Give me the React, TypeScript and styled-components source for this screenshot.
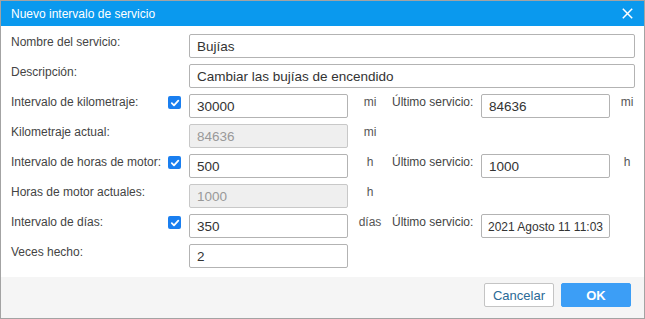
import styled, { createGlobalStyle } from 'styled-components';

const GlobalStyle = createGlobalStyle`
  html, body {
    margin: 0;
    padding: 0;
    background: #ffffff;
  }
  body {
    font-family: 'Liberation Sans', Arial, sans-serif;
  }
`;

type RowData = {
  label: string;
  checked?: boolean;
  value: string;
  disabled?: boolean;
  full?: boolean;
  unit?: string;
  last?: string;
  lastUnit?: string;
};

const rows: RowData[] = [
  { label: 'Nombre del servicio:', value: 'Bujías', full: true },
  { label: 'Descripción:', value: 'Cambiar las bujías de encendido', full: true },
  { label: 'Intervalo de kilometraje:', checked: true, value: '30000', unit: 'mi', last: '84636', lastUnit: 'mi' },
  { label: 'Kilometraje actual:', value: '84636', disabled: true, unit: 'mi' },
  { label: 'Intervalo de horas de motor:', checked: true, value: '500', unit: 'h', last: '1000', lastUnit: 'h' },
  { label: 'Horas de motor actuales:', value: '1000', disabled: true, unit: 'h' },
  { label: 'Intervalo de días:', checked: true, value: '350', unit: 'días', last: '2021 Agosto 11 11:03' },
  { label: 'Veces hecho:', value: '2' },
];

const Dialog = styled.div`
  box-sizing: border-box;
  width: 645px;
  height: 319px;
  border: 1px solid #a3a3a3;
  display: flex;
  flex-direction: column;
  background: #fff;
`;

const Header = styled.div`
  height: 25px;
  background: #0a99ee;
  color: #fff;
  display: flex;
  align-items: center;
  justify-content: space-between;
  padding: 0 11px 0 10px;
  font-size: 12px;
`;

const Close = styled.button`
  border: 0;
  background: none;
  padding: 0;
  width: 11px;
  height: 11px;
  display: flex;
  cursor: pointer;
`;

const Body = styled.div`
  flex: 1;
  display: flex;
  flex-direction: column;
  gap: 6px;
  padding: 8px 0 0 10px;
`;

const Row = styled.div`
  display: flex;
  align-items: flex-start;
  height: 24px;
`;

const Label = styled.div<{ $w: number }>`
  flex: 0 0 ${(p) => p.$w}px;
  min-width: 0;
  font-size: 12px;
  line-height: 14px;
  margin-top: 1px;
  color: #444;
  white-space: nowrap;
`;

const CheckCell = styled.div`
  flex: 0 0 21px;
  height: 24px;
  padding-top: 2px;
  box-sizing: border-box;
`;

const Check = styled.span`
  display: flex;
  align-items: center;
  justify-content: center;
  width: 13px;
  height: 13px;
  border-radius: 2px;
  background: #1a7ff0;
`;

const Field = styled.input<{ $w: number; $small?: boolean }>`
  box-sizing: border-box;
  flex: 0 0 ${(p) => p.$w}px;
  width: ${(p) => p.$w}px;
  height: 24px;
  margin: 0;
  padding: 1px ${(p) => (p.$small ? 6 : 7)}px 0;
  border: 1px solid #b3b3b3;
  border-radius: 2px;
  font-family: 'Liberation Sans', Arial, sans-serif;
  font-size: ${(p) => (p.$small ? 12 : 13.5)}px;
  color: #333;
  background: #fff;
  outline: none;

  &:disabled {
    background: #efefef;
    border-color: #c8c8c8;
    color: #999;
  }
`;

const Unit = styled.div<{ $w: number }>`
  flex: 0 0 ${(p) => p.$w}px;
  text-align: center;
  font-size: 12px;
  line-height: 14px;
  margin-top: 1px;
  color: #555;
`;

const Footer = styled.div`
  height: 41px;
  box-sizing: border-box;
  background: #f5f5f5;
  display: flex;
  justify-content: flex-end;
  align-items: flex-start;
  gap: 7px;
  padding: 6px 13px 0 0;
`;

const Button = styled.button<{ $primary?: boolean }>`
  box-sizing: border-box;
  height: 24px;
  width: 70px;
  border-radius: 2px;
  font-family: 'Liberation Sans', Arial, sans-serif;
  font-size: 13px;
  cursor: pointer;
  border: 1px solid ${(p) => (p.$primary ? '#3c9ef6' : '#c4c4c4')};
  background: ${(p) => (p.$primary ? '#3c9ef6' : '#fff')};
  color: ${(p) => (p.$primary ? '#fff' : '#2b6a96')};
  font-weight: ${(p) => (p.$primary ? 'bold' : 'normal')};
`;

const CheckMark = () => (
  <svg width="10" height="10" viewBox="0 0 10 10">
    <path d="M1.8 5.2 L4 7.3 L8.3 2.6" fill="none" stroke="#fff" strokeWidth="1.8" strokeLinecap="round" strokeLinejoin="round" />
  </svg>
);

const CloseIcon = () => (
  <svg width="11" height="11" viewBox="0 0 11 11">
    <path d="M0.8 0.8 L10.2 10.2 M10.2 0.8 L0.8 10.2" stroke="#fff" strokeWidth="1.5" />
  </svg>
);

export default function App() {
  return (
    <>
      <GlobalStyle />
      <Dialog>
        <Header>
          <span>Nuevo intervalo de servicio</span>
          <Close aria-label="Cerrar">
            <CloseIcon />
          </Close>
        </Header>
        <Body>
          {rows.map((r) => (
            <Row key={r.label}>
              <Label $w={157}>{r.label}</Label>
              <CheckCell>
                {r.checked && (
                  <Check>
                    <CheckMark />
                  </Check>
                )}
              </CheckCell>
              <Field $w={r.full ? 446 : 159} defaultValue={r.value} disabled={r.disabled} readOnly={!r.disabled} />
              {r.unit && <Unit $w={44}>{r.unit}</Unit>}
              {r.last && (
                <>
                  <Label $w={89}>Último servicio:</Label>
                  <Field $w={129} $small={r.last.length > 10} defaultValue={r.last} readOnly />
                  {r.lastUnit && <Unit $w={34}>{r.lastUnit}</Unit>}
                </>
              )}
            </Row>
          ))}
        </Body>
        <Footer>
          <Button>Cancelar</Button>
          <Button $primary>OK</Button>
        </Footer>
      </Dialog>
    </>
  );
}
